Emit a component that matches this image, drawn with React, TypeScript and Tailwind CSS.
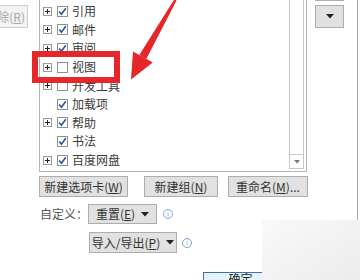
import React from "react";

const FONT = { fontFamily: '"Microsoft YaHei", "Noto Sans CJK SC", "Noto Sans", sans-serif' };

function Expand() {
  return (
    <div className="w-[9px] h-[9px] border border-[#9a9a9a] bg-white flex items-center justify-center relative">
      <div className="absolute w-[5px] h-px bg-[#222]" />
      <div className="absolute h-[5px] w-px bg-[#222]" />
    </div>
  );
}

function Check({ on }: { on: boolean }) {
  return (
    <div className="w-[11px] h-[11px] border border-[#8e8f8f] bg-white flex items-center justify-center">
      {on && (
        <svg width="9" height="9" viewBox="0 0 9 9">
          <path d="M1.2 4.6 L3.4 7.2 L7.8 1.2" fill="none" stroke="#2f4f9e" strokeWidth="1.6" />
        </svg>
      )}
    </div>
  );
}

const rows: { label: string; on: boolean; exp: boolean }[] = [
  { label: "引用", on: true, exp: true },
  { label: "邮件", on: true, exp: true },
  { label: "审阅", on: true, exp: true },
  { label: "视图", on: false, exp: true },
  { label: "开发工具", on: false, exp: true },
  { label: "加载项", on: true, exp: false },
  { label: "帮助", on: true, exp: true },
  { label: "书法", on: true, exp: false },
  { label: "百度网盘", on: true, exp: true },
];

function Tri() {
  return (
    <svg width="8" height="5" viewBox="0 0 8 5">
      <path d="M0 0 H8 L4 4.5 Z" fill="#222" />
    </svg>
  );
}

function Info() {
  return (
    <div className="w-[10px] h-[10px] rounded-full border border-[#7aa7d8] flex items-center justify-center text-[7px] leading-none text-[#7aa7d8]">
      i
    </div>
  );
}

const btn =
  "h-[21px] border border-[#adadad] bg-[#e1e1e1] flex items-center justify-center text-[12px] text-[#333] leading-none";

export default function App() {
  return (
    <div className="relative w-[360px] h-[280px] overflow-hidden bg-white" style={FONT}>
      <div className="flex h-full">
        <div className="w-[358px] h-full border-r border-[#a8a8a8] flex flex-col">
          {/* top area */}
          <div className="flex h-[172px] items-start">
            <div className="w-[39px] h-full">
              <div className="ml-[-36px] mt-[5px] w-[64px] h-[23px] border border-[#cfcfcf] bg-[#f3f3f3] flex items-center justify-end pr-[2px] text-[12px] text-[#a8a8a8] leading-none">
                删除(<span className="underline">R</span>)
              </div>
            </div>
            <div className="w-[268px] h-[172px] border-l border-r border-b border-[#b4b4b4] flex">
              <div className="flex-1 pt-[2px] pl-[3px]">
                {rows.map((r) => (
                  <div key={r.label} className="h-[18.6px] flex items-center">
                    <div className="w-[9px]">{r.exp && <Expand />}</div>
                    <div className="ml-[5px]">
                      <Check on={r.on} />
                    </div>
                    <span className="ml-[4px] text-[12px] text-[#3a3a3a] leading-none">{r.label}</span>
                  </div>
                ))}
              </div>
              <div className="w-[15px] mr-[2px] h-[169px] border-l border-r border-b border-[#c9c9c9] flex flex-col">
                <div className="flex-1" />
                <div className="h-[14px] border-t border-[#c9c9c9] flex items-center justify-center">
                  <svg width="6" height="4" viewBox="0 0 6 4">
                    <path d="M0 0 H6 L3 3.5 Z" fill="#777" />
                  </svg>
                </div>
              </div>
            </div>
            <div className="flex-1 h-full">
              <div className="ml-[8px] w-[29px] h-px bg-[#adadad]" />
              <div className="ml-[8px] mt-[4px] w-[29px] h-[23px] border border-[#adadad] bg-[#e1e1e1] flex items-center justify-center">
                <Tri />
              </div>
            </div>
          </div>

          {/* button row */}
          <div className="mt-[4px] pl-[39px] flex">
            <div className={`${btn} w-[89px]`}>
              新建选项卡(<span className="underline">W</span>)
            </div>
            <div className={`${btn} w-[74px] ml-[16px]`}>
              新建组(<span className="underline">N</span>)
            </div>
            <div className={`${btn} w-[80px] ml-[10px]`}>
              重命名(<span className="underline">M</span>)...
            </div>
          </div>

          <div className="mt-[7px] pl-[40px] flex items-center h-[20px]">
            <span className="w-[48px] text-[12px] text-[#555] leading-none">自定义：</span>
            <div className={`${btn} !h-[20px] w-[69px] gap-[6px]`}>
              <span>
                重置(<span className="underline">E</span>)
              </span>
              <Tri />
            </div>
            <div className="ml-[6px]">
              <Info />
            </div>
          </div>

          <div className="mt-[8px] pl-[89px] flex items-center h-[21px]">
            <div className={`${btn} w-[88px] gap-[6px]`}>
              <span>
                导入/导出(<span className="underline">P</span>)
              </span>
              <Tri />
            </div>
            <div className="ml-[5px]">
              <Info />
            </div>
          </div>

          <div className="mt-[14px] h-px bg-[#c8c8c8]" />

          <div className="mt-[5px] ml-[203px] w-[75px] h-[23px] border border-[#3b6fae] bg-[#e5f1fb] flex items-center justify-center text-[12px] text-[#222] leading-none">
            确定
          </div>
        </div>
      </div>

      {/* annotation overlays */}
      <div className="absolute left-[32px] top-[51px] w-[88px] h-[32px] border-[6px] border-[#e5262b]" />
      <svg className="absolute left-0 top-0" width="360" height="280" viewBox="0 0 360 280">
        <polygon points="174.5,-1 176.5,0.5 146.3,58.9 139.3,55.1" fill="#e5262b" />
        <polygon points="133,51.5 152.8,62.5 131,79.5" fill="#e5262b" />
      </svg>
      <div className="absolute left-[262px] top-[220px] w-[98px] h-[60px] bg-gradient-to-br from-[#f9f9f9] to-[#ececec]" />
    </div>
  );
}
